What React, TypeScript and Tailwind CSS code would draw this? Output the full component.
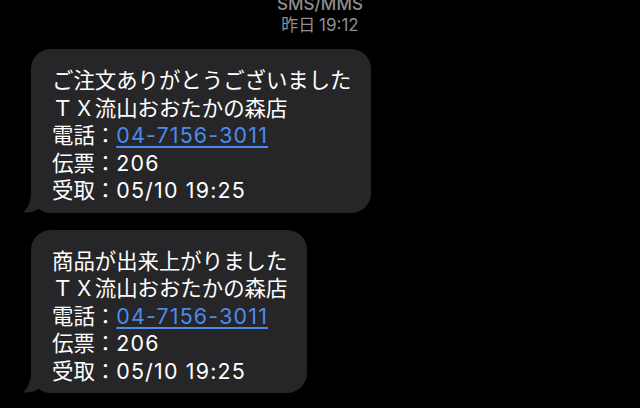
import React from 'react';

const latin = "font-['Inter','Noto_Sans_CJK_JP',sans-serif] tracking-[1.2px] leading-none";

const Tail = () => (
  <svg className="absolute -left-[9px] bottom-0" width="24" height="20" viewBox="0 0 24 20">
    <path d="M9 0 C9 8 6 15 1 19.5 C8 20 14 18 18 15 L24 20 L24 0 Z" fill="#262628" />
  </svg>
);

const Bubble = ({ title }: { title: string }) => (
  <div className="relative self-start">
    <Tail />
    <div className="relative rounded-[20px] bg-[#262628] pl-[21px] pr-[20px] pt-[16px] pb-[10px] text-[21.4px] leading-[27.5px] text-white">
      <div>{title}</div>
      <div>ＴＸ流山おおたかの森店</div>
      <div>
        電話：
        <a href="#" className={`${latin} text-[#4b8ceb] underline decoration-[1.5px] underline-offset-[3px]`}>
          04-7156-3011
        </a>
      </div>
      <div>
        伝票：<span className={latin}>206</span>
      </div>
      <div>
        受取：<span className={latin}>05/10 19:25</span>
      </div>
    </div>
  </div>
);

export default function App() {
  return (
    <div className="h-[408px] w-[640px] overflow-hidden bg-black font-['Noto_Sans_CJK_JP','Noto_Sans',sans-serif]">
      <div className="-mt-[6px] flex flex-col items-center text-[17px] leading-[20px] text-[#8e8e93]">
        <div className="font-['Inter',sans-serif] font-medium">SMS/MMS</div>
        <div>
          昨日 <span className="font-['Inter',sans-serif]">19:12</span>
        </div>
      </div>
      <div className="mt-[14px] flex flex-col gap-[17px] pl-[31px]">
        <Bubble title="ご注文ありがとうございました" />
        <Bubble title="商品が出来上がりました" />
      </div>
    </div>
  );
}
